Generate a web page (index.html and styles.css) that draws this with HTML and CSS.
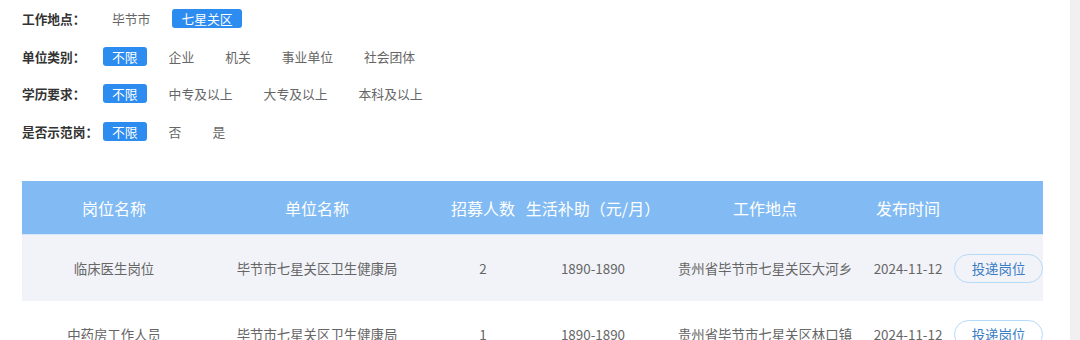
FILE: index.html
```html
<!DOCTYPE html>
<html lang="zh-CN">
<head>
<meta charset="utf-8">
<title>岗位列表</title>
<link rel="stylesheet" href="styles.css">
</head>
<body>
<div class="page">
  <div class="filters">
    <div class="frow">
      <span class="flabel">工作地点：</span>
      <span class="tag">毕节市</span>
      <span class="tag active">七星关区</span>
    </div>
    <div class="frow">
      <span class="flabel">单位类别：</span>
      <span class="tag active">不限</span>
      <span class="tag">企业</span>
      <span class="tag">机关</span>
      <span class="tag">事业单位</span>
      <span class="tag">社会团体</span>
    </div>
    <div class="frow">
      <span class="flabel">学历要求：</span>
      <span class="tag active">不限</span>
      <span class="tag">中专及以上</span>
      <span class="tag">大专及以上</span>
      <span class="tag">本科及以上</span>
    </div>
    <div class="frow">
      <span class="flabel">是否示范岗：</span>
      <span class="tag active">不限</span>
      <span class="tag">否</span>
      <span class="tag">是</span>
    </div>
  </div>

  <div class="table">
    <div class="trow thead">
      <div class="cell">岗位名称</div>
      <div class="cell">单位名称</div>
      <div class="cell">招募人数</div>
      <div class="cell">生活补助（元/月）</div>
      <div class="cell">工作地点</div>
      <div class="cell">发布时间</div>
      <div class="cell"></div>
    </div>
    <div class="trow odd">
      <div class="cell">临床医生岗位</div>
      <div class="cell">毕节市七星关区卫生健康局</div>
      <div class="cell">2</div>
      <div class="cell">1890-1890</div>
      <div class="cell">贵州省毕节市七星关区大河乡</div>
      <div class="cell">2024-11-12</div>
      <div class="cell end"><span class="btn">投递岗位</span></div>
    </div>
    <div class="trow">
      <div class="cell">中药房工作人员</div>
      <div class="cell">毕节市七星关区卫生健康局</div>
      <div class="cell">1</div>
      <div class="cell">1890-1890</div>
      <div class="cell">贵州省毕节市七星关区林口镇</div>
      <div class="cell">2024-11-12</div>
      <div class="cell end"><span class="btn">投递岗位</span></div>
    </div>
  </div>
</div>
</body>
</html>
```

FILE: styles.css
```css
html, body {
  margin: 0;
  padding: 0;
}
body {
  background: #f0f0f0;
  font-family: "Noto Sans CJK SC", "Noto Sans", "Liberation Sans", sans-serif;
  height: 340px;
  overflow: hidden;
}
.page {
  width: 1070px;
  height: 340px;
  background: #ffffff;
  padding: 9px 0 0 22px;
  box-sizing: border-box;
}
.filters {
  display: flex;
  flex-direction: column;
  gap: 18.7px;
}
.frow {
  display: flex;
  align-items: center;
  height: 19px;
  gap: 13px;
}
.flabel {
  width: 68px;
  font-size: 12.7px;
  font-weight: bold;
  color: #333333;
  white-space: nowrap;
}
.tag {
  font-size: 12.8px;
  line-height: 19px;
  height: 19px;
  padding: 0 9px;
  border-radius: 3px;
  color: #666666;
  white-space: nowrap;
}
.tag.active {
  background: #2d8cf0;
  color: #ffffff;
}
.table {
  margin-top: 40px;
  width: 1021px;
}
.trow {
  display: grid;
  grid-template-columns: 184px 222px 110px 110px 234px 52px 109px;
  height: 66px;
  font-size: 13.4px;
  color: #666666;
}
.trow.thead {
  height: 53px;
  background: #82bbf3;
  color: #ffffff;
  font-size: 16px;
  border-bottom: 1px solid #d6e7f8;
}
.trow.odd {
  background: #f2f3f8;
}
.cell {
  display: flex;
  align-items: center;
  justify-content: center;
  white-space: nowrap;
  min-width: 0;
}
.cell.end {
  justify-content: flex-end;
}
.btn {
  display: flex;
  align-items: center;
  justify-content: center;
  width: 89px;
  height: 29px;
  box-sizing: border-box;
  border: 1px solid #b5d9f9;
  border-radius: 15px;
  color: #3b7dc4;
  font-size: 13.4px;
  background: transparent;
}
```
